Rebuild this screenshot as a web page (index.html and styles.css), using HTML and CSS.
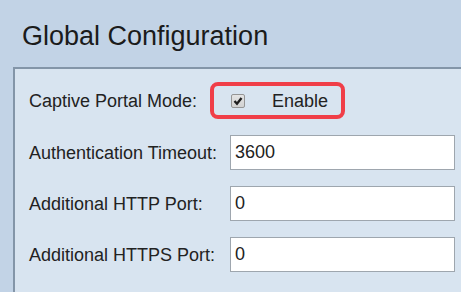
FILE: index.html
```html
<!DOCTYPE html>
<html>
<head>
<meta charset="utf-8">
<link rel="stylesheet" href="styles.css">
</head>
<body>
<div class="page">
  <h1 class="title">Global Configuration</h1>
  <div class="panel">
    <div class="form">
      <div class="label">Captive Portal Mode:</div>
      <div class="control">
        <span class="highlight">
          <span class="check"><svg width="10" height="10" viewBox="0 0 10 10"><path d="M1.5 5 L4 7.8 L8.5 2" fill="none" stroke="#1e1e1e" stroke-width="2.3"/></svg></span>
          <span class="enable">Enable</span>
        </span>
      </div>
      <div class="label">Authentication Timeout:</div>
      <div class="control"><div class="field">3600</div></div>
      <div class="label">Additional HTTP Port:</div>
      <div class="control"><div class="field">0</div></div>
      <div class="label">Additional HTTPS Port:</div>
      <div class="control"><div class="field">0</div></div>
    </div>
  </div>
</div>
</body>
</html>
```

FILE: styles.css
```css
html, body {
  margin: 0;
  padding: 0;
  height: 100%;
  overflow: hidden;
}
body {
  background: #c2d3e6;
  font-family: "Liberation Sans", Arial, sans-serif;
  color: #222;
}
.page {
  display: flex;
  flex-direction: column;
  height: 100%;
}
.title {
  margin: 0;
  height: 67px;
  box-sizing: border-box;
  padding: 20px 0 0 22px;
  font-size: 27px;
  font-weight: normal;
  color: #1b1b1b;
  line-height: 32px;
}
.panel {
  flex: 1;
  margin-left: 13px;
  border-top: 2px solid #8395a8;
  border-left: 2px solid #8395a8;
  background: #d8e4f0;
  padding: 13px 0 0 14px;
}
.form {
  display: grid;
  grid-template-columns: 201px 225px;
  row-gap: 16px;
  align-items: center;
}
.label {
  font-size: 18px;
  line-height: 22px;
}
.control {
  display: flex;
  align-items: center;
}
.highlight {
  display: inline-flex;
  align-items: center;
  margin-left: -20px;
  height: 37px;
  box-sizing: border-box;
  border: 4px solid #f03e48;
  border-radius: 8px;
  padding: 0 13px 0 17px;
}
.check {
  width: 14px;
  height: 14px;
  box-sizing: border-box;
  border: 1px solid #959595;
  border-radius: 2px;
  background: linear-gradient(#e4e4e4, #d2d2d2);
  display: flex;
  align-items: center;
  justify-content: center;
  margin-top: 1px;
}
.check svg {
  display: block;
}
.enable {
  margin-left: 27px;
  font-size: 18px;
  line-height: 22px;
}
.field {
  width: 225px;
  height: 35px;
  box-sizing: border-box;
  border: 1px solid #9ea6ae;
  background: #fff;
  font-size: 18px;
  line-height: 33px;
  padding-left: 4px;
}
```
